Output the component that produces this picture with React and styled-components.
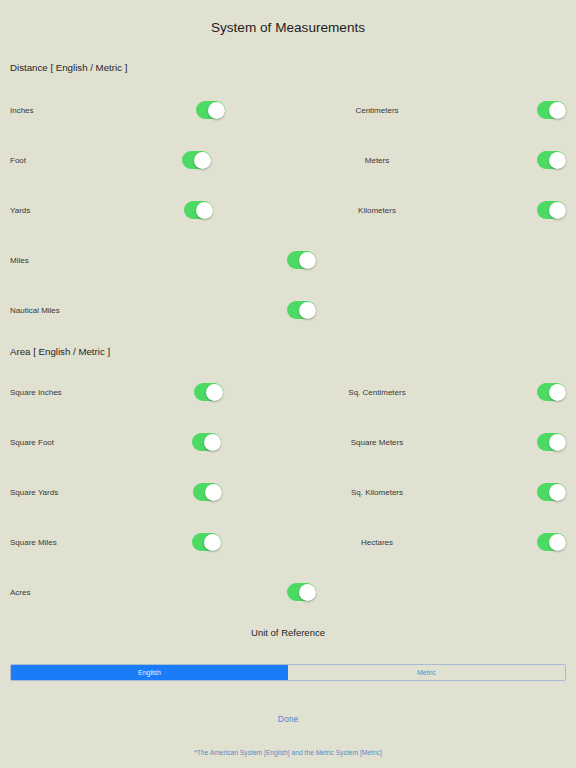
import styled, { createGlobalStyle } from "styled-components";

const GlobalStyle = createGlobalStyle`
  html, body {
    margin: 0;
    padding: 0;
    background: #e1e1d1;
  }
  body {
    font-family: "Liberation Sans", Arial, sans-serif;
    color: #2a2a2a;
  }
`;

const Page = styled.div`
  width: 576px;
  min-height: 768px;
  box-sizing: border-box;
  padding: 0 10px;
  background: #e1e1d1;
`;

const Title = styled.h1`
  margin: 0;
  height: 56px;
  line-height: 56px;
  text-align: center;
  font-size: 13.6px;
  font-weight: 400;
  color: #1e1e1e;
`;

const SectionHeader = styled.h2`
  margin: ${(p) => p.$top || 0}px 0 ${(p) => p.$bottom ?? 5}px;
  height: 24px;
  line-height: 24px;
  font-size: 9.7px;
  font-weight: 400;
  color: #262626;
`;

const Row = styled.div`
  display: grid;
  grid-template-columns: 278px 278px;
  height: 50px;
  align-items: center;
`;

const LeftCell = styled.div`
  display: grid;
  grid-template-columns: ${(p) => p.$at}px 29px;
  align-items: center;
  grid-column: ${(p) => (p.$wide ? "1 / -1" : "auto")};
`;

const RightCell = styled.div`
  display: grid;
  grid-template-columns: 178px 1fr 29px;
  align-items: center;
`;

const Label = styled.span`
  font-size: 8px;
  color: #383838;
  text-align: ${(p) => (p.$center ? "center" : "left")};
`;

const Track = styled.span`
  position: relative;
  display: block;
  width: 29px;
  height: 18px;
  border-radius: 9px;
  background: #4cd964;
  grid-column: ${(p) => p.$col || "auto"};
`;

const Knob = styled.span`
  position: absolute;
  top: 0.5px;
  right: 0.5px;
  width: 17px;
  height: 17px;
  border-radius: 50%;
  background: #fff;
  box-shadow: 0 1px 2px rgba(0, 0, 0, 0.3);
`;

const Centered = styled.div`
  margin-top: ${(p) => p.$top}px;
  height: ${(p) => p.$h}px;
  line-height: ${(p) => p.$h}px;
  text-align: center;
  font-size: ${(p) => p.$size}px;
  color: ${(p) => p.$color};
`;

const Segmented = styled.div`
  display: grid;
  grid-template-columns: 1fr 1fr;
  margin-top: 19px;
  height: 17px;
  border: 1px solid #a9bbd3;
  border-radius: 2px;
  box-sizing: border-box;
  overflow: hidden;
`;

const Segment = styled.div`
  display: flex;
  align-items: center;
  justify-content: center;
  font-size: 7px;
  background: ${(p) => (p.$active ? "#1a7cf7" : "transparent")};
  color: ${(p) => (p.$active ? "#e8f0ff" : "#5a8ad6")};
`;

function Switch({ col }) {
  return (
    <Track $col={col}>
      <Knob />
    </Track>
  );
}

const distance = [
  { left: "Inches", at: 186, right: "Centimeters" },
  { left: "Foot", at: 172, right: "Meters" },
  { left: "Yards", at: 174, right: "Kilometers" },
  { left: "Miles" },
  { left: "Nautical Miles" },
];

const area = [
  { left: "Square Inches", at: 184, right: "Sq. Centimeters" },
  { left: "Square Foot", at: 182, right: "Square Meters" },
  { left: "Square Yards", at: 183, right: "Sq. Kilometers" },
  { left: "Square Miles", at: 182, right: "Hectares" },
  { left: "Acres" },
];

function UnitRows({ items }) {
  return items.map((item) => (
    <Row key={item.left}>
      {item.right ? (
        <>
          <LeftCell $at={item.at}>
            <Label>{item.left}</Label>
            <Switch />
          </LeftCell>
          <RightCell>
            <Label $center>{item.right}</Label>
            <Switch col={3} />
          </RightCell>
        </>
      ) : (
        <LeftCell $at={277} $wide>
          <Label>{item.left}</Label>
          <Switch />
        </LeftCell>
      )}
    </Row>
  ));
}

export default function App() {
  return (
    <>
      <GlobalStyle />
      <Page>
        <Title>System of Measurements</Title>
        <SectionHeader>Distance [ English / Metric ]</SectionHeader>
        <UnitRows items={distance} />
        <SectionHeader $top={5} $bottom={3}>
          Area [ English / Metric ]
        </SectionHeader>
        <UnitRows items={area} />
        <Centered $top={4} $h={24} $size={9.5} $color="#262626">
          Unit of Reference
        </Centered>
        <Segmented>
          <Segment $active>English</Segment>
          <Segment>Metric</Segment>
        </Segmented>
        <Centered $top={26} $h={24} $size={8.5} $color="#4f82d6">
          Done
        </Centered>
        <Centered $top={14} $h={16} $size={6.7} $color="#5f88c4">
          *The American System [English] and the Metric System [Metric]
        </Centered>
      </Page>
    </>
  );
}
